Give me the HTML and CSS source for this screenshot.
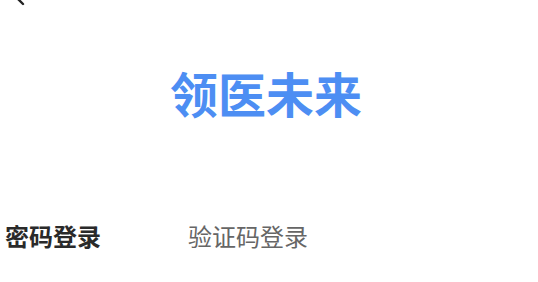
FILE: index.html
```html
<!DOCTYPE html>
<html lang="zh">
<head>
<meta charset="utf-8">
<link rel="stylesheet" href="styles.css">
</head>
<body>
<div class="page">
  <header class="nav">
    <svg class="back" width="24" height="24" viewBox="0 0 24 24"><path d="M15 -6 L6 3 L13 10" fill="none" stroke="#222" stroke-width="2.4" stroke-linecap="round" stroke-linejoin="round"/></svg>
  </header>
  <h1 class="brand">领医未来</h1>
  <nav class="tabs">
    <span class="tab active">密码登录</span>
    <span class="tab">验证码登录</span>
  </nav>
</div>
</body>
</html>
```
FILE: styles.css
```css
html, body { margin: 0; padding: 0; background: #fff; }
body { font-family: "Noto Sans CJK SC", "Noto Sans", sans-serif; }
.page { width: 538px; height: 282px; overflow: hidden; }
.nav { height: 8px; position: relative; }
.back { position: absolute; left: 10px; top: -6px; }
.brand {
  margin: 0;
  padding-top: 48px;
  text-align: center;
  font-size: 48px;
  line-height: 72px;
  font-weight: 700;
  color: #4d8ef3;
  padding-right: 6px;
  letter-spacing: 0;
}
.tabs { display: flex; gap: 87px; padding: 0 5px; margin-top: 91px; }
.tab { font-size: 24px; line-height: 34px; color: #666; }
.tab.active { color: #2a2a2a; font-weight: 700; }
```
